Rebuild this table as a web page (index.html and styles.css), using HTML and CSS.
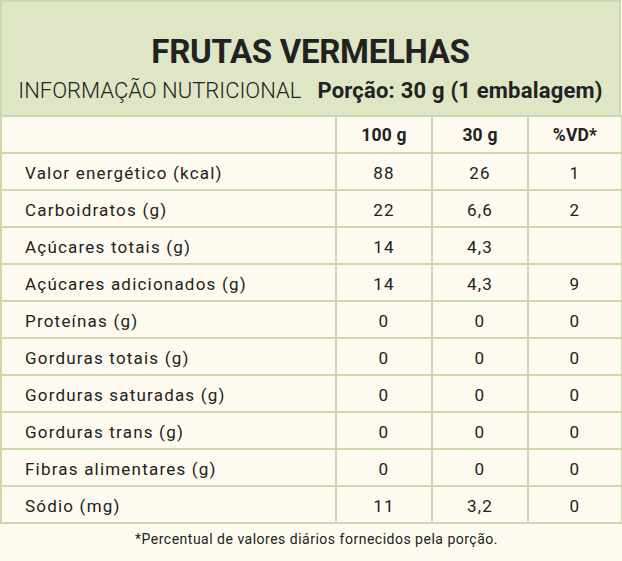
FILE: index.html
```html
<!DOCTYPE html>
<html lang="pt">
<head>
<meta charset="utf-8">
<link rel="stylesheet" href="styles.css">
</head>
<body>
<div class="label">
  <header class="head">
    <h1 class="title">FRUTAS VERMELHAS</h1>
    <div class="sub">
      <span class="info">INFORMAÇÃO NUTRICIONAL</span>
      <span class="portion">Porção: 30 g (1 embalagem)</span>
    </div>
  </header>
  <table class="facts">
    <colgroup>
      <col class="c-name"><col class="c-val"><col class="c-val"><col class="c-vd">
    </colgroup>
    <thead>
      <tr><th></th><th>100 g</th><th>30 g</th><th>%VD*</th></tr>
    </thead>
    <tbody>
      <tr><td>Valor energético (kcal)</td><td>88</td><td>26</td><td>1</td></tr>
      <tr><td>Carboidratos (g)</td><td>22</td><td>6,6</td><td>2</td></tr>
      <tr><td>Açúcares totais (g)</td><td>14</td><td>4,3</td><td></td></tr>
      <tr><td>Açúcares adicionados (g)</td><td>14</td><td>4,3</td><td>9</td></tr>
      <tr><td>Proteínas (g)</td><td>0</td><td>0</td><td>0</td></tr>
      <tr><td>Gorduras totais (g)</td><td>0</td><td>0</td><td>0</td></tr>
      <tr><td>Gorduras saturadas (g)</td><td>0</td><td>0</td><td>0</td></tr>
      <tr><td>Gorduras trans (g)</td><td>0</td><td>0</td><td>0</td></tr>
      <tr><td>Fibras alimentares (g)</td><td>0</td><td>0</td><td>0</td></tr>
      <tr><td>Sódio (mg)</td><td>11</td><td>3,2</td><td>0</td></tr>
    </tbody>
  </table>
  <p class="note">*Percentual de valores diários fornecidos pela porção.</p>
</div>
</body>
</html>
```

FILE: styles.css
```css
html, body {
  margin: 0;
  padding: 0;
  background: #fdfaef;
}
body {
  font-family: "Roboto", "DejaVu Sans", sans-serif;
  color: #222;
}
.label {
  width: 621px;
}
.head {
  background: #dfe6c5;
  border: 2px solid #cbd9af;
  border-bottom: 0;
  height: 113px;
  box-sizing: content-box;
  display: flex;
  flex-direction: column;
  align-items: center;
}
.title {
  margin: 32px 0 0;
  font-size: 33px;
  line-height: 36px;
  font-weight: 700;
  letter-spacing: -0.3px;
}
.sub {
  margin-top: 8px;
  display: flex;
  align-items: baseline;
  gap: 16px;
  white-space: nowrap;
}
.info {
  font-size: 22px;
  font-weight: 300;
}
.portion {
  font-size: 22px;
  font-weight: 700;
  letter-spacing: 0.2px;
}
.facts {
  width: 621px;
  border-collapse: collapse;
  table-layout: fixed;
  background: #fefaef;
}
.c-name { width: 335px; }
.c-val { width: 96px; }
.c-vd { width: 94px; }
.facts th, .facts td {
  border: 2px solid #cbd9af;
  height: 37px;
  padding: 3px 0 0;
  box-sizing: border-box;
  font-size: 17px;
  font-weight: 400;
  letter-spacing: 1.2px;
  text-align: center;
}
.facts th {
  font-weight: 700;
  font-size: 17.5px;
  letter-spacing: 0.2px;
  padding-top: 0;
}
.facts td:first-child {
  text-align: left;
  padding-left: 23px;
}
.note {
  margin: 7px 0 0;
  padding-left: 12px;
  text-align: center;
  font-size: 14px;
  letter-spacing: 0.5px;
}
```
